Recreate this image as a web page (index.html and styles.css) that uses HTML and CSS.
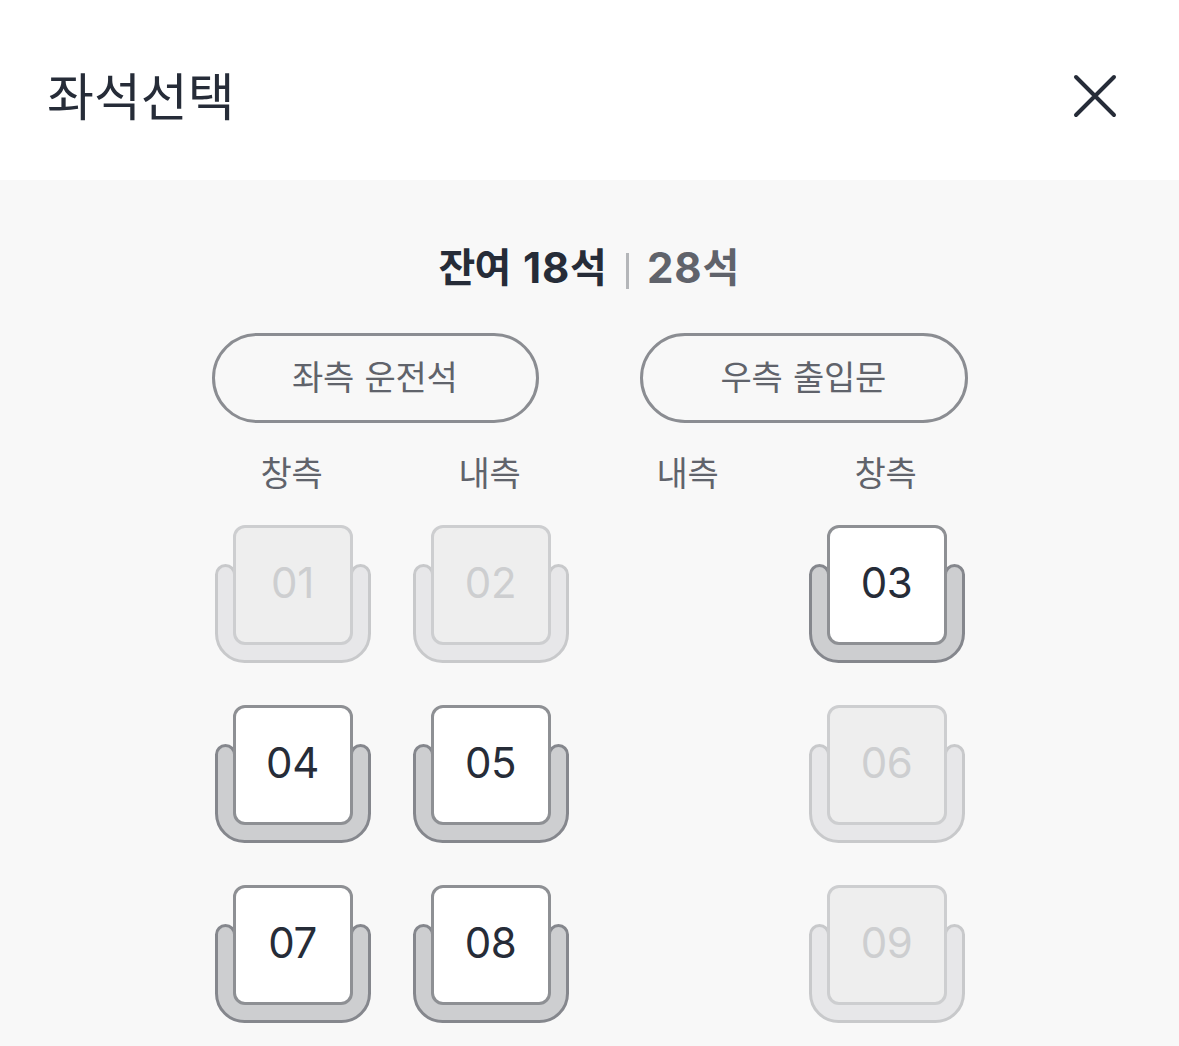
FILE: index.html
```html
<!DOCTYPE html>
<html lang="ko">
<head>
<meta charset="utf-8">
<title>좌석선택</title>
<link rel="stylesheet" href="styles.css">
</head>
<body>
<svg class="defs" width="0" height="0" aria-hidden="true">
  <symbol id="seat-base" viewBox="0 0 156 99">
    <path d="M1.5 69.5V10.5A9 9 0 0 1 19.5 10.5V62H136.500V10.5A9 9 0 0 1 154.500 10.500V69.500A28 28 0 0 1 126.500 97.500H29.500A28 28 0 0 1 1.500 69.500Z"/>
  </symbol>
</svg>
<header class="header">
  <h1 class="title">좌석선택</h1>
  <button class="close" type="button" aria-label="닫기">
    <svg width="44" height="44" viewBox="0 0 44 44"><path d="M3 3L41 41M41 3L3 41"/></svg>
  </button>
</header>
<main class="main">
  <div class="summary">
    <strong class="remain">잔여 <span class="num">18</span>석</strong>
    <span class="divider"></span>
    <strong class="total"><span class="num">28</span>석</strong>
  </div>
  <div class="sides">
    <div class="side"><span>좌측 운전석</span></div>
    <div class="side"><span>우측 출입문</span></div>
  </div>
  <div class="columns">
    <span>창측</span><span>내측</span><span>내측</span><span>창측</span>
  </div>
  <div class="seats">
    <button class="seat off" type="button" disabled><svg class="base"><use href="#seat-base"/></svg><span class="card">01</span></button>
    <button class="seat off" type="button" disabled><svg class="base"><use href="#seat-base"/></svg><span class="card">02</span></button>
    <button class="seat window" type="button"><svg class="base"><use href="#seat-base"/></svg><span class="card">03</span></button>
    <button class="seat" type="button"><svg class="base"><use href="#seat-base"/></svg><span class="card">04</span></button>
    <button class="seat" type="button"><svg class="base"><use href="#seat-base"/></svg><span class="card">05</span></button>
    <button class="seat window off" type="button" disabled><svg class="base"><use href="#seat-base"/></svg><span class="card">06</span></button>
    <button class="seat" type="button"><svg class="base"><use href="#seat-base"/></svg><span class="card">07</span></button>
    <button class="seat" type="button"><svg class="base"><use href="#seat-base"/></svg><span class="card">08</span></button>
    <button class="seat window off" type="button" disabled><svg class="base"><use href="#seat-base"/></svg><span class="card">09</span></button>
  </div>
</main>
</body>
</html>
```
FILE: styles.css
```css
* { box-sizing: border-box; }
body {
  margin: 0;
  height: 1046px;
  overflow: hidden;
  display: flex;
  flex-direction: column;
  background: #f8f8f8;
  color: #262c38;
  font-family: "Noto Sans CJK KR", sans-serif;
}
button { padding: 0; border: 0; background: none; }
.defs { display: none; }
.header {
  flex: none;
  height: 180px;
  padding: 10px 62px 0 47px;
  display: flex;
  align-items: center;
  justify-content: space-between;
  background: #fff;
}
.title {
  margin: 0 0 3px;
  font-size: 51px;
  line-height: 80px;
  font-weight: 400;
}
.close { display: flex; width: 44px; height: 44px; margin-top: 2px; }
.close path { fill: none; stroke: #262c38; stroke-width: 4; stroke-linecap: round; }
.main {
  flex: 1;
  display: flex;
  flex-direction: column;
  align-items: center;
  padding-top: 55px;
}
.summary {
  display: flex;
  align-items: center;
  height: 60px;
  margin-right: 2px;
  font-size: 40px;
  line-height: 60px;
  letter-spacing: -0.8px;
}
.remain { word-spacing: 2px; }
.num { font-family: Inter, sans-serif; font-size: 42px; line-height: 1; letter-spacing: 0.8px; vertical-align: -1px; }
.divider { width: 3px; height: 36px; margin: 12px 18px 0 20px; background: #b4b6b9; }
.total { color: #60636b; }
.sides { display: flex; gap: 101px; margin-top: 38px; }
.side {
  width: 327.500px;
  height: 90px;
  padding: 0 1px 4px 0;
  border: 3px solid #8b8d92;
  border-radius: 45px;
  display: flex;
  align-items: center;
  justify-content: center;
  color: #60636b;
  font-size: 34px;
  line-height: 50px;
  letter-spacing: -0.3px;
  word-spacing: 1.5px;
}
.columns {
  display: grid;
  grid-template-columns: repeat(4, 198px);
  margin: 24px 2px 0 0;
  color: #60636b;
  font-size: 34px;
  line-height: 50px;
  letter-spacing: -0.2px;
  text-align: center;
}
.seats {
  display: grid;
  grid-template-columns: repeat(4, 198px);
  grid-auto-rows: 138px;
  row-gap: 42px;
  justify-items: center;
  margin: 28px 0 0 1px;
}
.seat {
  width: 156px;
  height: 138px;
  display: grid;
  justify-items: center;
  color: #262c38;
}
.seat.window { grid-column: 4; }
.base {
  grid-area: 1 / 1;
  align-self: end;
  width: 156px;
  height: 99px;
  fill: #cdced0;
  stroke: #85878d;
  stroke-width: 3;
}
.card {
  grid-area: 1 / 1;
  align-self: start;
  position: relative;
  width: 120px;
  height: 120px;
  padding-right: 1px;
  border: 3px solid #8e9094;
  border-radius: 12px;
  background: #fff;
  font: 400 42px/109px Inter, sans-serif;
  letter-spacing: -0.4px;
  text-align: center;
}
.off .base { fill: #e7e7e9; stroke: #c8c9cb; }
.off .card { background: #eee; border-color: #cdced0; color: #cdced0; }
```
